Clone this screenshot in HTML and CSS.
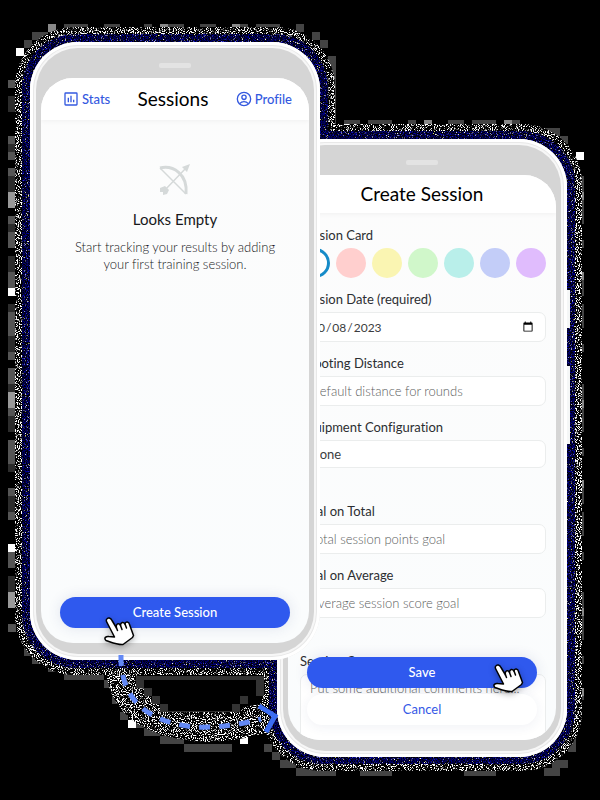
FILE: index.html
```html
<!DOCTYPE html>
<html lang="en">
<head>
<meta charset="utf-8">
<meta name="viewport" content="width=device-width, initial-scale=1">
<title>Sessions</title>
<link rel="stylesheet" href="styles.css">
</head>
<body>
<main class="stage">
  <svg class="layer" viewBox="0 0 600 800" aria-hidden="true">
    <defs>
      <filter id="grain" x="0" y="0" width="600" height="800" filterUnits="userSpaceOnUse" color-interpolation-filters="sRGB">
        <feTurbulence type="fractalNoise" baseFrequency="0.93" numOctaves="2" seed="4"/>
        <feColorMatrix values="12 0 0 0 -6.3  12 0 0 0 -6.3  12 0 0 0 -6.3  0 0 0 0 1"/>
        <feComposite in2="SourceGraphic" operator="in"/>
      </filter>
      <filter id="navy" x="0" y="0" width="600" height="800" filterUnits="userSpaceOnUse" color-interpolation-filters="sRGB">
        <feTurbulence type="fractalNoise" baseFrequency="0.87" numOctaves="2" seed="9"/>
        <feColorMatrix values="5 0 0 0 -3.1  5 0 0 0 -3.1  1.6 1.2 0 0 -1.15  0 0 0 0 1"/>
        <feComposite in2="SourceGraphic" operator="in"/>
      </filter>
    </defs>
    <g class="blocks" shape-rendering="crispEdges">
      <path stroke="#555" d="M12 80V632" stroke-dasharray="8 8 16 24 24 8 32 16"/>
      <path stroke="#999" d="M12 144V640" stroke-dasharray="8 40 16 56 8 72"/>
      <path stroke="#2c2c2c" d="M12 96V620" stroke-dasharray="16 32 8 24"/>
      <path stroke="#444" d="M48 28H304" stroke-dasharray="8 8 24 16 16 24"/>
      <path stroke="#888" d="M48 28H304" stroke-dasharray="8 104 8 64"/>
      <path stroke="#444" d="M344 124H544M580 176V700" stroke-dasharray="16 8 24 16 8 32"/>
      <path stroke="#888" d="M424 124H544M580 192V700" stroke-dasharray="8 72 8 120"/>
      <path stroke="#444" d="M32 36h16M24 44h8M312 36h8M320 44h8M332 56v72M544 132h16M560 140h8M24 652h8M32 660h16M48 668h16M64 676h40M104 684h8M112 700h8M120 716h8M128 724h16M144 732h16M160 740h24M184 748h48M264 748h8M272 756h8M280 764h16M296 772h40M360 772h32M464 772h32M544 772h16M552 764h16M568 748h8M568 740h8"/>
      <path stroke="#fff" d="M16 52h8M8 292h8M8 548h8M128 724h8M240 740h8M576 156h8"/>
    </g>
    <g filter="url(#grain)">
      <rect x="15" y="27" width="320" height="648" rx="60"/>
      <rect x="262" y="124" width="320" height="647" rx="60"/>
      <path class="trail-halo" d="M120 658C120 708 155 724 205 727C232 727 248 722 272 716"/>
    </g>
    <path fill="#333" shape-rendering="crispEdges" d="M136 676H264V696H248V704H240V712H160V704H152V696H144V688H136Z"/>
    <path fill="#000" shape-rendering="crispEdges" d="M144 680H256V696H240V704H232V711H168V704H160V696H152V688H144Z"/>
    <g filter="url(#navy)">
      <rect x="22" y="34" width="306" height="634" rx="54"/>
      <rect x="269" y="131" width="306" height="633" rx="54"/>
    </g>
  </svg>

  <section class="phone phone-front">
    <div class="bezel">
      <span class="speaker"></span>
      <div class="screen">
        <header class="bar bar-home">
          <a class="nav" href="#stats">
            <svg viewBox="0 0 24 24" class="nav-icon" aria-hidden="true"><rect x="3" y="3" width="18" height="18" rx="1"/><path d="M8 10v7M12 7v10M16 13v4"/></svg>
            Stats</a>
          <h1>Sessions</h1>
          <a class="nav" href="#profile">
            <svg viewBox="0 0 24 24" class="nav-icon" aria-hidden="true"><circle cx="12" cy="12" r="10"/><circle cx="12" cy="9.500" r="3.200"/><path d="M5.500 19C9 15 15 15 18.500 19"/></svg>
            Profile</a>
        </header>
        <div class="empty">
          <svg class="bow" viewBox="0 0 32 32" aria-hidden="true">
            <path class="bow-limb" d="M1 5C14 2 29 11 27 31"/>
            <path class="bow-string" d="M1 5L27 31M5 28L27 5"/>
            <path class="bow-tip" d="M31 1l-3 8-5-5zM1 25l5-2 4 4-2 4-4 1v-3H1z"/>
          </svg>
          <h2>Looks Empty</h2>
          <p>Start tracking your results by adding<br>your first training session.</p>
        </div>
        <div class="actions">
          <button class="btn btn-primary" type="button">Create Session</button>
        </div>
      </div>
    </div>
  </section>

  <section class="phone phone-back">
    <div class="bezel">
      <span class="speaker"></span>
      <div class="screen">
        <header class="bar"><h1>Create Session</h1></header>
        <form class="form">
          <fieldset class="field">
            <legend>Session Card</legend>
            <div class="swatches">
              <input type="radio" name="card" class="swatch white" aria-label="White" checked>
              <input type="radio" name="card" class="swatch red" aria-label="Red">
              <input type="radio" name="card" class="swatch yellow" aria-label="Yellow">
              <input type="radio" name="card" class="swatch green" aria-label="Green">
              <input type="radio" name="card" class="swatch teal" aria-label="Teal">
              <input type="radio" name="card" class="swatch blue" aria-label="Blue">
              <input type="radio" name="card" class="swatch purple" aria-label="Purple">
            </div>
          </fieldset>
          <div class="field"><label for="date">Session Date (required)</label><input class="control control-date" id="date" type="date" value="2023-10-08"></div>
          <div class="field"><label for="distance">Shooting Distance</label><input class="control" id="distance" type="text" placeholder="Default distance for rounds"></div>
          <div class="field"><label for="equipment">Equipment Configuration</label><select class="control control-select" id="equipment"><option>None</option></select></div>
          <div class="field field-spaced"><label for="total">Goal on Total</label><input class="control" id="total" type="text" placeholder="Total session points goal"></div>
          <div class="field"><label for="average">Goal on Average</label><input class="control" id="average" type="text" placeholder="Average session score goal"></div>
          <div class="field field-spaced"><label for="comments">Session Comment</label><textarea class="control control-area" id="comments" placeholder="Put some additional comments here..."></textarea></div>
        </form>
        <div class="actions">
          <button class="btn btn-primary" type="button">Save</button>
          <button class="btn btn-plain" type="button">Cancel</button>
        </div>
      </div>
    </div>
    <span class="side side-short"></span>
    <span class="side side-long"></span>
  </section>

  <svg class="layer layer-top" viewBox="0 0 600 800" aria-hidden="true">
    <defs>
      <g id="hand">
        <path d="M1.500 2.500C3-.2 5.800.8 7 3.500L11.500 11C10.500 6.500 14 5.500 15.500 8.500C15.500 5 18.500 4.500 20 7C20.500 4 24 4.500 24.500 7.500L28.500 18.500L27.500 20.500L18 27.500C12 28 7 25.500 1 23.500C-1.500 21 1 19 4 19.500L9.500 20L2 5.500C1.300 4.300 1 3.400 1.500 2.500Z"/>
        <path d="M11.500 11l1 2.500M15.500 8.500l1.500 4M20 7l1.500 4"/>
      </g>
    </defs>
    <path class="trail" d="M121 655C120 704 153 722 193 727C222 728 242 724 261 719"/>
    <path class="trail-head" d="M259 706L275 716L266 732"/>
    <use href="#hand" class="hand" x="105" y="617"/>
    <use href="#hand" class="hand" x="494" y="664"/>
  </svg>
</main>
</body>
</html>
```
FILE: styles.css
```css
* { box-sizing: border-box; }

body {
  margin: 0;
  background: #000;
  color: #17181b;
  font: 13px/17px Lato, "Liberation Sans", sans-serif;
  font-variant-ligatures: none;
}

button, input, select, textarea { font: inherit; color: inherit; }

.stage {
  position: relative;
  display: flex;
  align-items: flex-start;
  max-width: 600px;
  aspect-ratio: 3 / 4;
  margin: 0 auto;
  padding: 42px 33px 0 30px;
  overflow: hidden;
}

.layer { position: absolute; inset: 0; width: 100%; height: 100%; }
.layer-top { z-index: 3; pointer-events: none; }
.blocks path { stroke-width: 8; fill: none; }
.trail-halo { fill: none; stroke: #fff; stroke-width: 30; }
.trail { fill: none; stroke: #6389f5; stroke-width: 5; stroke-dasharray: 11 9; }
.trail-head { fill: none; stroke: #3c6df2; stroke-width: 5; }
.hand {
  fill: #fff;
  stroke: #000;
  stroke-width: 1.5;
  stroke-linejoin: round;
  stroke-linecap: round;
  filter: drop-shadow(0 2px 3px rgb(0 0 0 / 30%));
}

.phone {
  position: relative;
  display: flex;
  flex: 1 1 0;
  min-width: 0;
  aspect-ratio: 290 / 618;
  padding: 6px;
  border-radius: 48px;
  background: #f7f7f7;
  box-shadow: inset 0 0 0 3px #fff, inset 0 0 0 4px #e8e8e8;
}
.phone-front { z-index: 2; }
.phone-back { z-index: 1; margin: 97px 0 0 -43px; }

.bezel {
  position: relative;
  display: flex;
  flex: 1;
  min-width: 0;
  padding: 30px 5px 11px;
  border-radius: 42px;
  background: #d5d5d5;
}

.speaker {
  position: absolute;
  top: 15px;
  left: calc(50% - 16px);
  width: 32px;
  height: 5px;
  border-radius: 2px;
  background: #e3e3e3;
}

.side { position: absolute; left: 100%; width: 3px; background: #f5f7f7; }
.side-short { top: 151px; height: 38px; }
.side-long { top: 227px; height: 78px; }

.screen {
  position: relative;
  display: flex;
  flex: 1;
  flex-direction: column;
  min-width: 0;
  min-height: 0;
  overflow: hidden;
  border-radius: 32px;
  background: linear-gradient(#fcfcfc, #fafcfd);
}

.bar {
  display: flex;
  flex: none;
  align-items: center;
  justify-content: center;
  height: 38px;
  background: #fff;
  box-shadow: 0 1px 5px rgb(0 0 0 / 5%);
}
.bar-home { justify-content: space-between; height: 42px; padding: 0 17px 0 22px; }

h1, h2, p { margin: 0; }
h1 { font-size: 19px; font-weight: 400; line-height: 24px; color: #000; }
h2 { font-size: 15px; font-weight: 400; line-height: 18px; }

.nav {
  display: flex;
  align-items: center;
  gap: 3px;
  color: #3459df;
  font-weight: 500;
  text-decoration: none;
}
.nav-icon { width: 16px; height: 16px; fill: none; stroke: currentColor; stroke-width: 2; }

.empty {
  display: flex;
  flex-direction: column;
  align-items: center;
  padding-top: 43px;
  text-align: center;
}
.bow { width: 32px; height: 32px; margin-bottom: 15px; fill: none; stroke: #d5d9d9; }
.bow-limb { stroke-width: 3; }
.bow-string { stroke-width: 1.5; }
.bow-tip { fill: #d5d9d9; stroke: none; }
.empty p { margin-top: 11px; color: #17181b; font-weight: 300; }

.actions {
  position: absolute;
  inset: auto 19px 15px;
  display: flex;
  flex-direction: column;
  gap: 6px;
}
.btn { height: 31px; padding: 0; border: 0; border-radius: 16px; cursor: pointer; }
.btn-primary {
  background: #2f59ee;
  color: #fff;
  font-weight: 500;
  box-shadow: 0 0 14px rgb(40 60 120 / 12%);
}
.btn-plain { background: #fff; color: #3459e6; box-shadow: 0 2px 12px rgb(40 60 120 / 7%); }

.form { display: flex; flex-direction: column; gap: 12px; padding: 13px 10px 0 12px; color: #3b3d40; }
.field { display: flex; flex: none; flex-direction: column; min-width: 0; margin: 0; padding: 0; border: 0; }
.field-spaced { margin-top: 22px; }
.field label, .field legend { margin-bottom: 4px; padding: 0; line-height: 18px; color: #2c2e31; }

.swatches { display: flex; justify-content: space-between; }
.swatch { width: 30px; height: 30px; margin: 0; border-radius: 50%; appearance: none; }
.white { border: 3px solid #168bc8; background: #fff; }
.red { background: #ffcfce; }
.yellow { background: #faf5b2; }
.green { background: #d0f7ca; }
.teal { background: #b9efea; }
.blue { background: #c3cdf8; }
.purple { background: #e0bcfd; }

.control {
  width: 100%;
  height: 30px;
  padding: 0 9px;
  border: 1px solid #ebeded;
  border-radius: 7px;
  outline: 0;
  background: #fff;
}
.control::placeholder { color: #5c5e60; font-weight: 300; opacity: 1; }
.control-date { font-size: 12px; }
.control-select { height: 28px; appearance: none; }
.control-area { height: 90px; padding-top: 5px; resize: none; }
```
